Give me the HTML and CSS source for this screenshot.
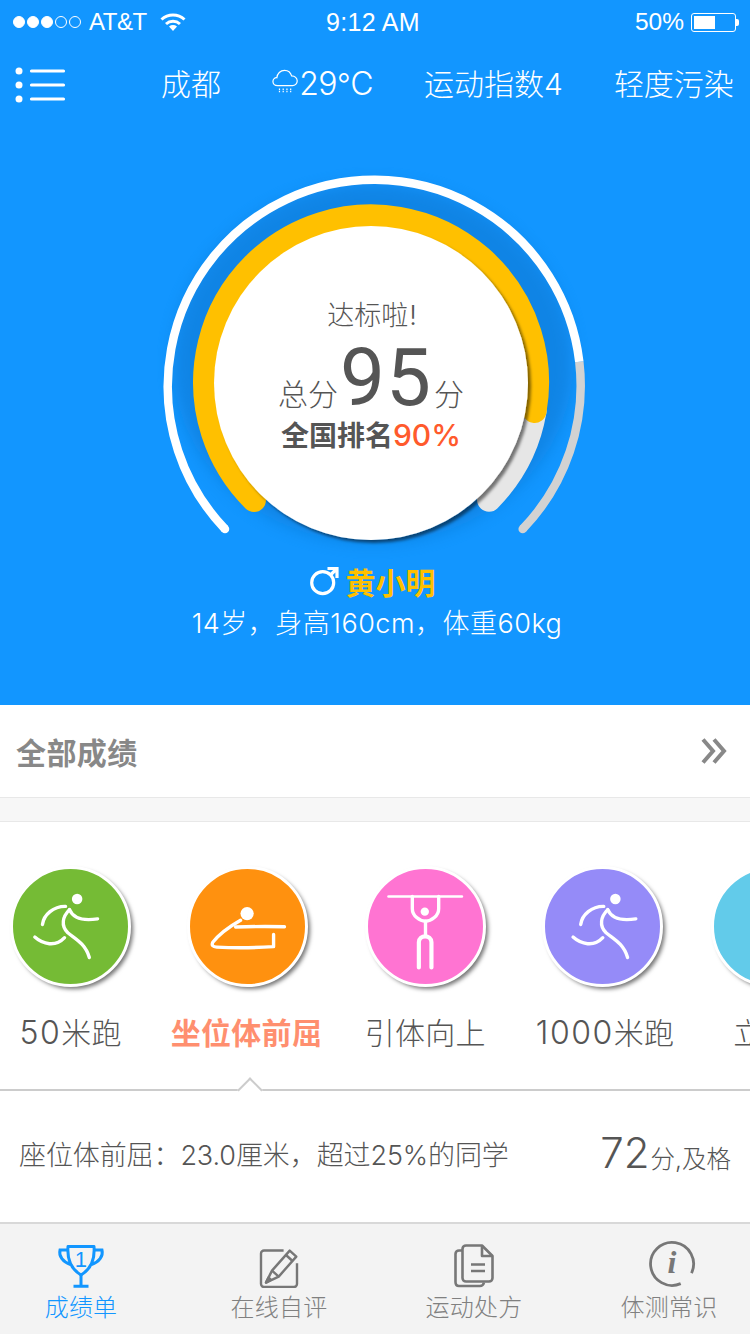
FILE: index.html
```html
<!DOCTYPE html>
<html>

	<head>
		<meta charset="utf-8">
		<title>成绩单</title>
		<link rel="stylesheet" href="styles.css">
	</head>

	<body>
		<div class="hero">
			<div class="status">
				<div class="status-left">
					<i class="dot"></i><i class="dot"></i><i class="dot"></i><i class="dot off"></i><i class="dot off"></i>
					<span class="carrier">AT&amp;T</span>
					<svg class="wifi" width="26" height="20" viewBox="0 0 26 20">
						<path d="M1.5 7.5C8 1.5 18 1.5 24.5 7.5" fill="none" stroke="#fff" stroke-width="3"/>
						<path d="M6 12C10 8.4 16 8.4 20 12" fill="none" stroke="#fff" stroke-width="3"/>
						<path d="M9 14.5C11.5 12.6 14.500 12.6 17 14.500L13 19Z" fill="#fff"/>
					</svg>
				</div>
				<div class="status-time">9:12 AM</div>
				<div class="status-right">
					<span>50%</span>
					<div class="battery"><div class="battery-fill"></div></div>
					<div class="battery-nub"></div>
				</div>
			</div>
			<div class="topbar">
				<svg class="menu" width="52" height="36" viewBox="0 0 52 36">
					<circle cx="4" cy="4" r="3.500" fill="#fff"/>
					<circle cx="4" cy="18" r="3.500" fill="#fff"/>
					<circle cx="4" cy="32" r="3.500" fill="#fff"/>
					<path d="M16.500 4H48.500M16.500 18H48.500M16.500 32H48.500" stroke="#fff" stroke-width="3.200" stroke-linecap="round"/>
				</svg>
				<span class="city">成都</span>
				<span class="weather">
					<svg width="28" height="27" viewBox="0 0 28 27" fill="none" stroke="#fff" stroke-width="1.300">
						<path d="M6 18C2.500 18 1 15.500 1 13.500C1 11 3 9.200 5.200 9.500C5.500 5 9 1.500 13.500 1.500C17.500 1.500 20 4 21 7.500C24.500 7.500 27 10 27 13C27 16 24.500 18 22 18Z"/>
						<path d="M8 21V25M12 21V25M16 21V25M20 21V25" stroke-dasharray="1.500 1"/>
					</svg>
					<span class="temp">29<span class="deg">°</span>C</span>
				</span>
				<span class="sport">运动指数4</span>
				<span class="air">轻度污染</span>
			</div>
			<div class="gauge">
				<svg class="gauge-arcs" width="450" height="390" viewBox="0 0 450 390">
					<defs>
						<filter id="blur" x="-20%" y="-20%" width="140%" height="140%">
							<feGaussianBlur stdDeviation="8"/>
						</filter>
						<filter id="disk" x="-10%" y="-10%" width="120%" height="120%">
							<feDropShadow dx="3" dy="3" stdDeviation="1.500" flood-color="#000" flood-opacity="0.5"/>
						</filter>
					</defs>
					<ellipse cx="223" cy="198" rx="200" ry="180" fill="#0b70c6" opacity="0.45" filter="url(#blur)"/>
					<path d="M429.300 196.700A206.500 206.500 0 0 1 372.700 364" fill="none" stroke="#d2d2d2" stroke-width="8.500"/>
					<circle cx="372.700" cy="364" r="4.250" fill="#d2d2d2"/>
					<path d="M75 364A206.500 206.500 0 1 1 429.300 196.700" fill="none" stroke="#fff" stroke-width="8.500"/>
					<circle cx="75" cy="364" r="4.250" fill="#fff"/>
					<path d="M384.600 246A166 166 0 0 1 339 334.700" fill="none" stroke="#e6e6e6" stroke-width="24" stroke-linecap="round"/>
					<path d="M104 335A166 166 0 1 1 384.600 246" fill="none" stroke="#ffc000" stroke-width="24" stroke-linecap="round"/>
					<circle cx="221" cy="218" r="157" fill="#fff" filter="url(#disk)"/>
				</svg>
				<div class="gauge-text">
					<div class="gauge-title">达标啦<span class="bang">!</span></div>
					<div class="gauge-score"><span>总分</span><b>95</b><span>分</span></div>
					<div class="gauge-rank">全国排名<em>90%</em></div>
				</div>
			</div>
			<div class="person">
				<svg width="30" height="30" viewBox="0 0 30 30" fill="none" stroke="#fff" stroke-width="3.200">
					<circle cx="13.700" cy="16.700" r="11"/>
					<path d="M21.500 9L28 2.500M18.500 2.500H28V12"/>
				</svg>
				<span class="person-name">黄小明</span>
			</div>
			<div class="person-info">14岁，身高160cm，体重60kg</div>
		</div>

		<div class="all-row">
			<span>全部成绩</span>
			<svg width="28" height="28" viewBox="0 0 28 28" fill="none" stroke="#888" stroke-width="4">
				<path d="M3 2.500L13 14L3 25.500M14 2.500L24 14L14 25.500"/>
			</svg>
		</div>
		<div class="band"></div>

		<div class="items">
			<div class="item">
				<div class="ball green">
					<svg viewBox="0 0 116 116" fill="none" stroke="#fff" stroke-width="3.400" stroke-linecap="round">
						<circle cx="64.700" cy="30.300" r="5.300" fill="#fff" stroke="none"/>
						<path d="M29.700 56C31 46 41 37.500 53 37.700"/>
						<path d="M57 41C50 48 48 57 55.300 64.300C62 70 73 75 77 89.300"/>
						<path d="M57 41C60 48 68 53 85.300 50.300"/>
						<path d="M22 68.700C30 76 43 79 52 69.300"/>
					</svg>
				</div>
				<div class="item-label"><span class="num">50</span>米跑</div>
			</div>
			<div class="item">
				<div class="ball orange">
					<svg viewBox="0 0 116 116" fill="none" stroke="#fff" stroke-width="3.400" stroke-linecap="round" stroke-linejoin="round">
						<circle cx="57.600" cy="45" r="6.700" fill="#fff" stroke="none"/>
						<path d="M46 58.500C62 58 80 57.800 95.300 58.300"/>
						<path d="M51 51.700C40 58 29 66 23 74C21.500 77 23 78.500 27 78.800C45 79.800 66 79.500 84.300 78.300V66"/>
					</svg>
				</div>
				<div class="item-label on">坐位体前屈</div>
			</div>
			<div class="item">
				<div class="ball pink">
					<svg viewBox="0 0 116 116" fill="none" stroke="#fff" stroke-width="3.400" stroke-linecap="round" stroke-linejoin="round">
						<path d="M20.700 27.700H94.700" stroke-width="2.600"/>
						<path d="M44.700 27.700V40C44.700 47 52 52.700 58 52.700C64 52.700 71.300 47 71.300 40V27.700"/>
						<circle cx="57.300" cy="43" r="4.200" fill="#fff" stroke="none"/>
						<path d="M58 52.700V66"/>
						<path d="M51.300 99.300V74C51.300 66 64 66 64 74V99.300" stroke-width="4.200"/>
					</svg>
				</div>
				<div class="item-label">引体向上</div>
			</div>
			<div class="item">
				<div class="ball purple">
					<svg viewBox="0 0 116 116" fill="none" stroke="#fff" stroke-width="3.400" stroke-linecap="round">
						<g transform="translate(6.300 0)">
							<circle cx="64.700" cy="30.300" r="5.300" fill="#fff" stroke="none"/>
							<path d="M29.700 56C31 46 41 37.500 53 37.700"/>
							<path d="M57 41C50 48 48 57 55.300 64.300C62 70 73 75 77 89.300"/>
							<path d="M57 41C60 48 68 53 85.300 50.300"/>
							<path d="M22 68.700C30 76 43 79 52 69.300"/>
						</g>
					</svg>
				</div>
				<div class="item-label long"><span class="num">1000</span>米跑</div>
			</div>
			<div class="item last">
				<div class="ball blue"></div>
				<div class="item-label">立定跳远</div>
			</div>
		</div>

		<div class="detail">
			<i class="notch"></i>
			<span class="detail-text">座位体前屈：23.0厘米，超过25%的同学</span>
			<span class="detail-score"><b>72</b>分,及格</span>
		</div>

		<div class="tabs">
			<div class="tab on">
				<svg width="48" height="44" viewBox="0 0 48 44" fill="none" stroke="#1296ff" stroke-width="3">
					<path d="M11 2.500H37C38 15 34 25 24 31C14 25 10 15 11 2.500Z" stroke-linejoin="round"/>
					<path d="M11 6H3C1.500 12 6 18 13.500 20.500M37 6H45C46.500 12 42 18 34.500 20.500"/>
					<path d="M24 31V42M16.500 42.300H31.500"/>
					<text x="24" y="23" class="cup-one">1</text>
				</svg>
				<span>成绩单</span>
			</div>
			<div class="tab second">
				<svg width="40" height="44" viewBox="0 0 40 44" fill="none" stroke="#777" stroke-width="2.400" stroke-linejoin="round">
					<path d="M24.600 6.500H5C3.500 6.500 2 8 2 9.500V40C2 41.500 3.500 43 5 43H35C36.500 43 38 41.500 38 40V19.300"/>
					<path d="M7 38.600L13 26.600L30.700 6.600L37.300 12.600L19.700 32.600Z"/>
					<path d="M13 26.600L19.700 32.600M27 11L33.500 17"/>
					<path d="M7 38.600L9.500 33.500L12 35.800Z" fill="#777"/>
				</svg>
				<span>在线自评</span>
			</div>
			<div class="tab">
				<svg width="40" height="44" viewBox="0 0 40 44" fill="none" stroke="#777" stroke-width="2.600" stroke-linejoin="round">
					<path d="M8 6.500H5C3 6.500 1.500 8 1.500 10V38C1.500 40.500 3 42 5 42H26C28 42 29.500 40.500 30 38.500"/>
					<path d="M12 1.500H28L38.500 12V34C38.500 36 37 37.500 35 37.500H12C10 37.500 8.500 36 8.500 34V5C8.500 3 10 1.500 12 1.500Z"/>
					<path d="M28 1.500V12H38.500M17 20.500H31M17 27H31"/>
				</svg>
				<span>运动处方</span>
			</div>
			<div class="tab">
				<svg class="info" width="48" height="48" viewBox="0 0 48 48" fill="none" stroke="#777" stroke-width="2.800">
					<path d="M43.500 33.100A21.500 21.500 0 1 0 32.700 43.600"/>
					<text x="24" y="33" class="info-i">i</text>
				</svg>
				<span>体测常识</span>
			</div>
		</div>
	</body>

</html>
```
FILE: styles.css
```css
* {
	box-sizing: border-box;
}
body {
	margin: 0px;
	width: 750px;
	height: 1334px;
	overflow: hidden;
	background-color: #fff;
	font-family: "Inter", "Noto Sans CJK SC", sans-serif;
	color: #555;
}
.hero {
	height: 705px;
	background-color: #1296ff;
	color: #fff;
}
.status {
	position: relative;
	display: flex;
	justify-content: space-between;
	align-items: center;
	height: 44px;
	padding: 0px 11px 0px 13px;
	font-family: "Liberation Sans", sans-serif;
	font-size: 25px;
}
.status-left {
	display: flex;
	align-items: center;
	gap: 2px;
}
.dot {
	width: 12px;
	height: 12px;
	border-radius: 50%;
	background-color: #fff;
	border: solid 1px #fff;
}
.dot.off {
	background-color: transparent;
}
.carrier {
	margin-left: 6px;
	font-size: 24px;
	letter-spacing: -0.5px;
}
.wifi {
	margin-left: 11px;
}
.status-time {
	position: absolute;
	left: 326px;
	letter-spacing: 0.3px;
}
.status-right {
	display: flex;
	align-items: center;
	font-size: 24.500px;
}
.battery {
	width: 45px;
	height: 19px;
	margin-left: 7px;
	padding: 2px;
	border: solid 1px #fff;
	border-radius: 3px;
}
.battery-fill {
	width: 21px;
	height: 100%;
	background-color: #fff;
}
.battery-nub {
	width: 3px;
	height: 7px;
	background-color: #fff;
	border-radius: 0px 2px 2px 0px;
}
.topbar {
	display: flex;
	align-items: center;
	height: 81px;
	padding: 0px 0px 6px 15px;
	font-size: 30px;
	font-weight: 300;
	white-space: nowrap;
}
.menu {
	flex: none;
	margin-top: 6px;
}
.city {
	margin-left: 94px;
}
.weather {
	flex: none;
	display: flex;
	align-items: center;
	width: 101px;
	margin-left: 51px;
}
.temp {
	margin-left: 1px;
	padding-top: 4px;
	font-size: 32px;
	font-weight: 300;
	letter-spacing: -0.5px;
}
.deg {
	font-size: 30px;
	line-height: 0;
}
.sport {
	margin-left: 51px;
}
.air {
	margin-left: 51px;
}
.gauge {
	position: relative;
	width: 450px;
	height: 390px;
	margin: 40px 0px 0px 150px;
}
.gauge-arcs {
	position: absolute;
	top: 0px;
	left: 0px;
	overflow: visible;
}
.gauge-text {
	position: absolute;
	top: 133px;
	left: 71px;
	width: 300px;
	display: flex;
	flex-direction: column;
	align-items: center;
	color: #555;
}
.gauge-title {
	margin-left: 2px;
	font-size: 27px;
	line-height: 36px;
	font-weight: 300;
}
.bang {
	margin-left: 1px;
}
.gauge-score {
	display: flex;
	align-items: baseline;
	height: 63px;
	margin-top: 16px;
	font-size: 30px;
	line-height: 30px;
	font-weight: 300;
}
.gauge-score b {
	margin: 0px 2px;
	font-size: 80px;
	line-height: 56px;
	font-weight: 400;
	letter-spacing: 1px;
	font-family: "Roboto", sans-serif;
}
.gauge-rank {
	margin-top: 5px;
	font-size: 28px;
	line-height: 36px;
	font-weight: bold;
}
.gauge-rank em {
	font-style: normal;
	font-weight: 500;
	font-size: 30px;
	line-height: 30px;
	color: #ff5a2c;
}
.person {
	display: flex;
	justify-content: center;
	align-items: center;
	gap: 7px;
	height: 36px;
	margin: 8px 0px 0px -6px;
}
.person-name {
	font-size: 30px;
	font-weight: bold;
	color: #ffc000;
}
.person-info {
	margin: 5px 0px 0px 4px;
	text-align: center;
	font-size: 27px;
	line-height: 40px;
	font-weight: 300;
	letter-spacing: 0.5px;
	white-space: nowrap;
}
.all-row {
	display: flex;
	justify-content: space-between;
	align-items: center;
	height: 93px;
	padding: 0px 22px 0px 16px;
	border-bottom: solid 1px #e8e8e8;
	font-size: 30px;
	font-weight: bold;
	letter-spacing: 0.4px;
	color: #888;
}
.band {
	height: 24px;
	background-color: #f7f7f7;
	border-bottom: solid 1px #e8e8e8;
}
.items {
	display: flex;
	height: 267px;
	margin-left: -18px;
	padding-top: 44px;
	overflow: hidden;
}
.item {
	flex: none;
	width: 177.300px;
	display: flex;
	flex-direction: column;
	align-items: center;
}
.item.last {
	align-items: flex-start;
}
.item-label {
	margin-top: 24px;
	font-size: 30px;
	line-height: 44px;
	font-weight: 300;
	letter-spacing: 0.3px;
	white-space: nowrap;
}
.item-label .num {
	font-size: 32px;
	letter-spacing: 1.500px;
}
.item-label.on {
	margin-right: 3px;
	font-weight: bold;
	color: #ff8f6f;
}
.item-label.long {
	margin-left: 5px;
}
.item.last .ball {
	margin-left: 20px;
}
.item.last .item-label {
	margin-left: 42px;
}
.ball {
	flex: none;
	box-sizing: content-box;
	width: 115px;
	height: 115px;
	border: solid 3px #fff;
	border-radius: 50%;
	box-shadow: 3px 3px 4px -1px rgba(0, 0, 0, 0.55);
}
.ball svg {
	display: block;
	width: 100%;
	height: 100%;
}
.green {
	background-color: #75bb35;
}
.orange {
	background-color: #ff910f;
}
.pink {
	background-color: #ff74d2;
}
.purple {
	background-color: #958bf8;
}
.blue {
	background-color: #62cbea;
}
.detail {
	position: relative;
	display: flex;
	justify-content: space-between;
	align-items: center;
	height: 133px;
	padding: 0px 19px 6px 19px;
	border-top: solid 2px #ccc;
	white-space: nowrap;
}
.notch {
	position: absolute;
	top: -10px;
	left: 241px;
	width: 18px;
	height: 18px;
	background-color: #fff;
	border-top: solid 2px #ccc;
	border-left: solid 2px #ccc;
	transform: rotate(45deg);
}
.detail-text {
	font-size: 27px;
	font-weight: 300;
	letter-spacing: -0.1px;
}
.detail-score {
	margin-bottom: 3px;
	font-size: 24.500px;
	font-weight: 300;
}
.detail-score b {
	margin-right: 1px;
	font-size: 42px;
	font-weight: 300;
}
.tabs {
	display: flex;
	gap: 99px;
	height: 112px;
	padding-left: 45px;
	background-color: #f3f3f3;
	border-top: solid 2px #d8d8d8;
	font-size: 24px;
	font-weight: 300;
	letter-spacing: 0.2px;
	color: #808080;
}
.tab {
	flex: none;
	width: 96px;
	height: 110px;
	display: flex;
	flex-direction: column;
	align-items: center;
	justify-content: flex-end;
	padding-bottom: 11px;
	white-space: nowrap;
}
.tab.on {
	width: 72px;
	color: #1296ff;
}
.tab.second {
	margin-left: 15px;
}
.info {
	margin-left: 5px;
}
.cup-one {
	fill: #1296ff;
	stroke: none;
	font-family: "Liberation Sans", sans-serif;
	font-size: 22px;
	text-anchor: middle;
}
.info-i {
	fill: #777;
	stroke: none;
	font-family: "Liberation Serif", serif;
	font-size: 32px;
	font-weight: bold;
	font-style: italic;
	text-anchor: middle;
}
```
